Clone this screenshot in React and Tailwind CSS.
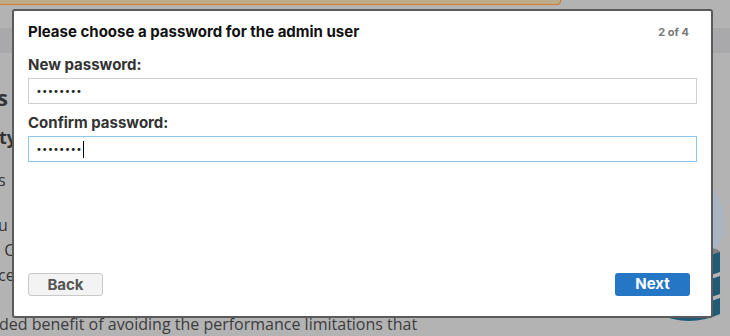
import React from "react";

const Dots = ({ caret }) => (
  <div className="flex items-center h-full pl-[7px]">
    <span className="text-[10px] tracking-[-0.2px] text-[#222] font-['DejaVu_Sans',sans-serif]">
      ••••••••
    </span>
    {caret && <span className="ml-[1px] w-px h-[17px] bg-black" />}
  </div>
);

const App = () => {
  return (
    <div className="relative w-[730px] h-[336px] overflow-hidden bg-[#b3b3b3] font-['Inter',sans-serif]">
      {/* page behind the overlay */}
      <div className="h-[5px] w-[561px] bg-[#bcac8a] border-b border-r border-[#d27a2a] rounded-br-[4px]" />
      <div className="mt-[23px] h-[25px] bg-[#a9a9ab]" />
      <div className="text-[#333] font-['Open_Sans',sans-serif]">
        <p className="mt-[29px] -ml-[3px] text-[22px] font-bold leading-[30px]">s</p>
        <p className="mt-[12px] -ml-[1px] text-[18px] font-bold leading-[26px]">ty</p>
        <p className="mt-[18px] -ml-[2px] text-[16px] leading-[24px]">s</p>
        <p className="mt-[21px] -ml-[2px] text-[16px] leading-[24px]">
          u <span className="text-[#7a5a2e]">r</span>
        </p>
        <p className="mt-px text-[16px] leading-[24px]">&nbsp;C</p>
        <p className="mt-px -ml-[2px] text-[16px] leading-[24px]">ce</p>
        <p className="mt-[25px] -ml-px text-[16px] leading-[24px] text-[#3c3c3c]">
          ded benefit of avoiding the performance limitations that
        </p>
      </div>

      {/* database picture on the right */}
      <svg className="absolute left-[640px] top-[160px]" width="90" height="176" viewBox="0 0 90 176">
        <circle cx="28" cy="62" r="56" fill="#a9b5c0" />
        <ellipse cx="49" cy="92" rx="31" ry="6" fill="#7a7f84" />
        <path d="M18 92 q31 12 62 0 v20 q-31 12 -62 0 z" fill="#1f5a78" />
        <path d="M18 116 q31 12 62 0 v18 q-31 12 -62 0 z" fill="#1f5a78" />
        <path d="M18 138 q31 12 62 0 v16 q-31 14 -62 0 z" fill="#1f5a78" />
      </svg>

      {/* dialog */}
      <div className="absolute left-[12px] top-[9px] w-[701px] h-[309px] bg-white border-2 border-[#5a5a5a] rounded-[3px] flex flex-col">
        <div className="flex items-center justify-between pl-[14px] pr-[22px] pt-[12px]">
          <h2 className="text-[15px] leading-[18px] font-bold text-[#111]">
            Please choose a password for the admin user
          </h2>
          <span className="text-[11px] font-bold text-[#777]">2 of 4</span>
        </div>
        <div className="pl-[14px] pr-[14px]">
          <label className="block mt-[15px] text-[15px] leading-[18px] font-bold text-[#333]">
            New password:
          </label>
          <div className="mt-[4px] h-[26px] border border-[#cfcfcf]">
            <Dots />
          </div>
          <label className="block mt-[10px] text-[15px] leading-[18px] font-bold text-[#333]">
            Confirm password:
          </label>
          <div className="mt-[4px] h-[26px] border border-[#8ec6ee]">
            <Dots caret />
          </div>
        </div>
        <div className="mt-auto flex justify-between pl-[14px] pr-[21px] pb-[20px]">
          <button className="w-[75px] h-[23px] bg-[#f3f3f3] border border-[#c9c9c9] rounded-[3px] text-[15px] font-bold text-[#555]">
            Back
          </button>
          <button className="w-[75px] h-[23px] bg-[#2577c6] rounded-[3px] text-[15px] font-bold text-white">
            Next
          </button>
        </div>
      </div>
    </div>
  );
};

export default App;
